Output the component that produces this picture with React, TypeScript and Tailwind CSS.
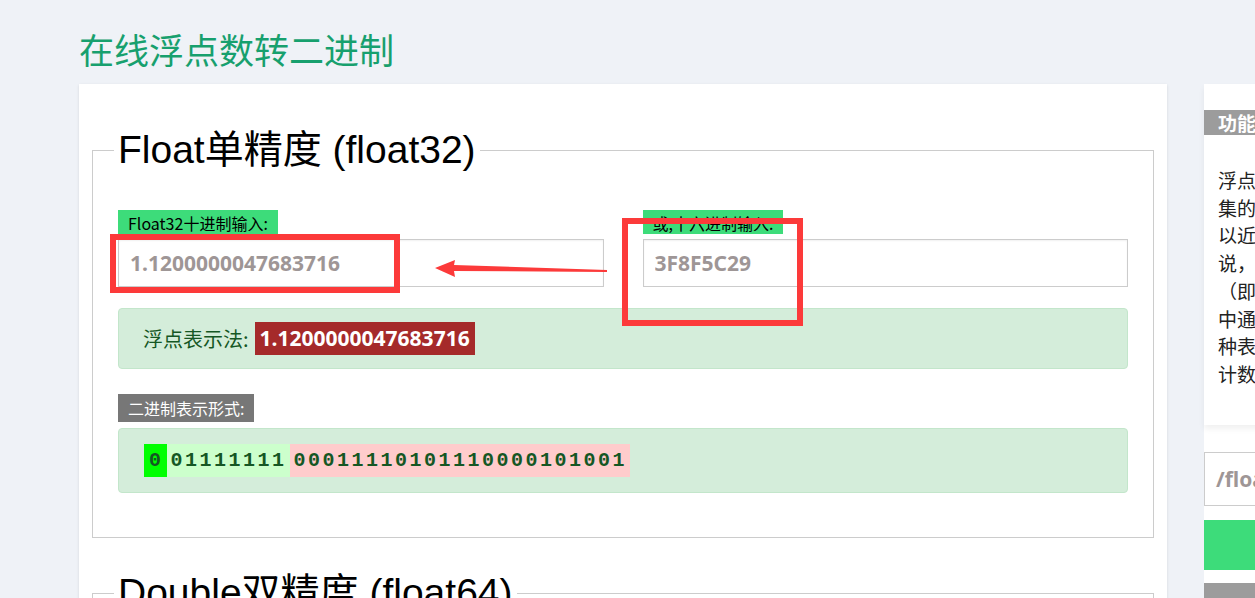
import { useState } from 'react';

const cjk = '"Noto Sans CJK SC", sans-serif';
const latinCjk = '"Liberation Sans", "Noto Sans CJK SC", sans-serif';
const num = '"Noto Sans", "Noto Sans CJK SC", sans-serif';

const introLines = [
    '浮点数是属于有理数中某特定子',
    '集的数的数字表示，在计算机中用',
    '以近似表示任意某个实数。具体的',
    '说，这个实数由一个整数或定点数',
    '（即尾数）乘以某个基数（计算机',
    '中通常是2）的整数次幂得到，这',
    '种表示方法类似于基数为10的科学',
    '计数法。',
];

function Label({ children, gray }: { children: React.ReactNode; gray?: boolean }) {
    return (
        <span
            className={`inline-block px-[10px] text-[16px] ${gray ? 'bg-[#777777] text-white h-[28px] leading-[28px]' : 'bg-[#3ddc7a] text-black h-[24px] leading-[26px]'}`}
            style={{ fontFamily: cjk }}
        >
            {children}
        </span>
    );
}

export default function App() {
    const [dec, setDec] = useState('1.1200000047683716');
    const [hex, setHex] = useState('3F8F5C29');

    return (
        <div className="relative min-h-screen w-full overflow-hidden bg-[#eff2f7]">
            <div className="flex pl-[79px]">
                {/* Main column */}
                <div className="w-[1088px] shrink-0">
                    <h1 className="pt-[28px] pb-[14px] text-[35px] leading-[42px] text-[#17a06e]" style={{ fontFamily: cjk }}>
                        在线浮点数转二进制
                    </h1>
                    <div className="bg-white pt-[43px] px-[13px] pb-[40px] shadow-sm">
                        <fieldset className="border border-[#cccccc] px-[25px] pb-[44px]">
                            <legend className="-ml-[4px] px-[4px] text-[39px] leading-[46px] text-black" style={{ fontFamily: latinCjk }}>
                                Float单精度 (float32)
                            </legend>
                            <div className="mt-[37px] grid grid-cols-2 gap-[39px]">
                                <div className="flex flex-col">
                                    <div><Label>Float32十进制输入:</Label></div>
                                    <input
                                        value={dec}
                                        onChange={(e) => setDec(e.target.value)}
                                        className="mt-[3px] h-[48px] w-full border border-[#cccccc] px-[11px] text-[21px] font-bold text-[#9e9696] shadow-[inset_0_1px_2px_rgba(0,0,0,0.06)] outline-none"
                                        style={{ fontFamily: num }}
                                    />
                                </div>
                                <div className="flex flex-col">
                                    <div><Label>或,十六进制输入:</Label></div>
                                    <input
                                        value={hex}
                                        onChange={(e) => setHex(e.target.value)}
                                        className="mt-[3px] h-[48px] w-full border border-[#cccccc] px-[11px] text-[21px] font-bold text-[#9e9696] shadow-[inset_0_1px_2px_rgba(0,0,0,0.06)] outline-none"
                                        style={{ fontFamily: num }}
                                    />
                                </div>
                            </div>

                            <div className="mt-[21px] flex h-[61px] items-center rounded-[4px] border border-[#c3e6cb] bg-[#d4edda] pl-[24px]">
                                <span className="text-[20px] text-[#155724]" style={{ fontFamily: cjk }}>浮点表示法:</span>
                                <span className="ml-[6px] h-[33px] bg-[#a52a2a] px-[5px] text-[21px] font-bold leading-[33px] text-white" style={{ fontFamily: num }}>
                                    1.1200000047683716
                                </span>
                            </div>

                            <div className="mt-[25px]"><Label gray>二进制表示形式:</Label></div>
                            <div className="mt-[6px] flex h-[65px] items-center rounded-[4px] border border-[#c3e6cb] bg-[#d4edda] pl-[25px]">
                                <div className="flex text-[20px] font-bold leading-[33px] tracking-[2.5px] text-[#155724]" style={{ fontFamily: '"Liberation Mono", monospace' }}>
                                    <span className="bg-[#00ff00] pl-[5px] pr-[3px]">0</span>
                                    <span className="bg-[#ccffcc] pl-[4px] pr-[3px]">01111111</span>
                                    <span className="bg-[#ffcccc] pl-[4px] pr-[3px]">00011110101110000101001</span>
                                </div>
                            </div>
                        </fieldset>

                        <fieldset className="mt-[32px] border border-[#cccccc] px-[25px] pb-[40px]">
                            <legend className="-ml-[4px] px-[4px] text-[39px] leading-[46px] text-black" style={{ fontFamily: latinCjk }}>
                                Double双精度 (float64)
                            </legend>
                            <div className="h-[200px]" />
                        </fieldset>
                    </div>
                </div>

                {/* Sidebar */}
                <div className="ml-[37px] mt-[84px] w-[320px] shrink-0 bg-white">
                    <div className="h-[341px] bg-white pt-[26px] shadow-[0_4px_6px_rgba(0,0,0,0.06)]">
                        <div className="h-[25px] bg-[#9c9c9c] pl-[14px] text-[19px] font-bold leading-[25px] text-white" style={{ fontFamily: cjk }}>
                            功能介绍
                        </div>
                        <div className="pt-[31px] pl-[14px] text-[19px] leading-[27.7px] text-[#222222]" style={{ fontFamily: cjk }}>
                            {introLines.map((l) => (
                                <div key={l} className="whitespace-nowrap">{l}</div>
                            ))}
                        </div>
                    </div>
                    <div className="mt-[27px] h-[54px] border border-[#cccccc] px-[11px] text-[21px] font-bold leading-[52px] text-[#9e9696]" style={{ fontFamily: num }}>
                        /float2bin
                    </div>
                    <div className="mt-[14px] h-[50px] bg-[#3ddc7a]" />
                    <div className="mt-[13px] h-[30px] bg-[#9c9c9c]" />
                </div>
            </div>

            {/* Red annotations */}
            <div className="absolute left-[110px] top-[234px] h-[59px] w-[290px] border-[6px] border-[#fc3a3a]" />
            <div className="absolute left-[622px] top-[218px] h-[108px] w-[181px] border-[6px] border-[#fc3a3a]" />
            <svg className="absolute left-[430px] top-[255px]" width="180" height="26" viewBox="430 255 180 26">
                <polygon points="435,268 455,260 454,265 607,270 607,272 454,271 455,277" fill="#fc3a3a" />
            </svg>
        </div>
    );
}
